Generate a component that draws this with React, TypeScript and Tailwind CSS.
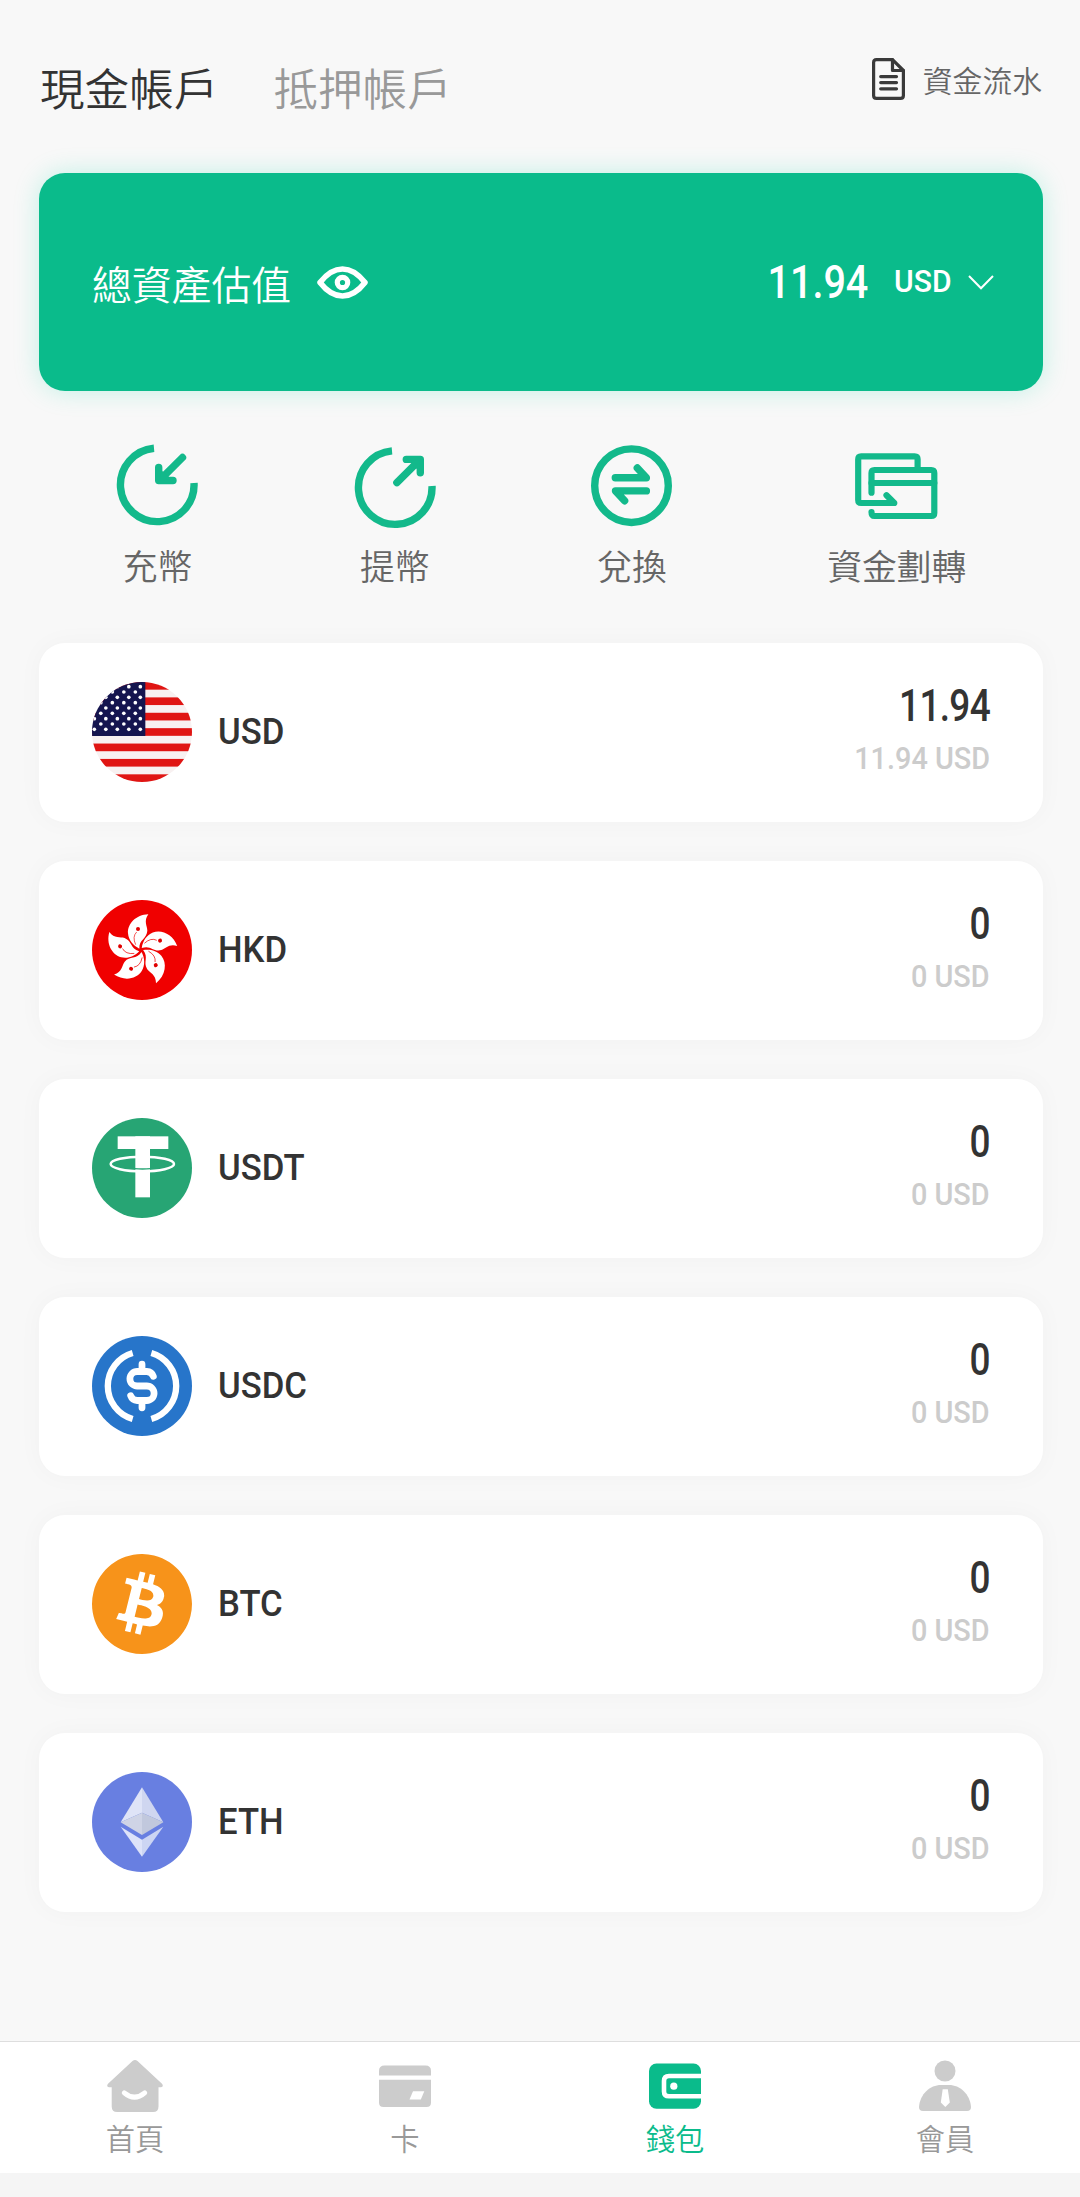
import type { ReactNode } from "react";
import { SiBitcoin } from "react-icons/si";
import { TbCurrencyDollar } from "react-icons/tb";

interface Asset {
  symbol: string;
  amount: string;
  value: string;
  icon: ReactNode;
}

interface Action {
  label: string;
  icon: ReactNode;
}

interface NavItem {
  label: string;
  active?: boolean;
  icon: ReactNode;
}

const STRIPES = [0, 2, 4, 6, 8, 10, 12];
const STAR_ROWS = [0, 1, 2, 3, 4, 5, 6, 7, 8];
const STAR_COLS = [0, 1, 2, 3, 4];
const PETALS = [0, 72, 144, 216, 288];

function UsdIcon() {
  return (
    <svg viewBox="0 0 300 300" className="size-full rounded-full">
      <rect width="300" height="300" fill="#f8f1f1" />
      {STRIPES.map((i) => (
        <rect key={i} y={i * 23.08} width="300" height="23" fill="#e01513" />
      ))}
      <rect width="160" height="162" fill="#15154f" />
      {STAR_ROWS.map((row) =>
        STAR_COLS.map((col) => (
          <circle
            key={`${row}-${col}`}
            cx={(row % 2 ? 130 : 145) - col * 34.5}
            cy={14 + row * 16}
            r="5.5"
            fill="#fff"
          />
        ))
      )}
    </svg>
  );
}

function HkdIcon() {
  return (
    <svg viewBox="0 0 300 300" className="size-full">
      <circle cx="150" cy="150" r="150" fill="#f00000" />
      {PETALS.map((angle) => (
        <g key={angle} transform={`rotate(${angle} 147 150)`}>
          <path
            d="M169 43C132 44 106 72 108 100C110 122 124 137 142 146C141 117 164 118 166 92C166 78 154 64 169 43Z"
            fill="#fff"
          />
          <path d="M134 96Q120 110 131 134" fill="none" stroke="#f00000" strokeWidth="2" />
          <circle cx="138" cy="87" r="6" fill="#e00000" />
        </g>
      ))}
    </svg>
  );
}

function UsdtIcon() {
  return (
    <svg viewBox="0 0 300 300" className="size-full">
      <circle cx="150" cy="150" r="150" fill="#27a574" />
      <ellipse cx="151" cy="138" rx="95" ry="22" fill="none" stroke="#fff" strokeWidth="7.5" />
      <rect x="77" y="55" width="152" height="38" fill="#fff" />
      <rect x="130" y="55" width="44" height="183" fill="#fff" />
      <path d="M128 152Q151 154 176 152" fill="none" stroke="#27a574" strokeWidth="4" />
    </svg>
  );
}

function UsdcIcon() {
  return (
    <div className="flex size-full items-center justify-center rounded-full bg-[#2775ca]">
      <svg viewBox="0 0 300 300" className="size-full shrink-0" fill="none" stroke="#fff" strokeWidth="19">
        <path d="M122 51A103 103 0 0 0 122 249" />
        <path d="M178 51A103 103 0 0 1 178 249" />
      </svg>
      <TbCurrencyDollar className="-ml-[100px] h-[58px] w-[100px] shrink-0 text-white [stroke-width:2.8]" />
    </div>
  );
}

function BtcIcon() {
  return (
    <div className="size-full rounded-full bg-white">
      <SiBitcoin className="size-full text-[#f7931a]" />
    </div>
  );
}

function EthIcon() {
  return (
    <svg viewBox="0 0 300 300" className="size-full">
      <circle cx="150" cy="150" r="150" fill="#687fe1" />
      <path d="M150 46L86 151L150 122Z" fill="#dfe4f7" />
      <path d="M150 46L214 151L150 122Z" fill="#cfd6f0" />
      <path d="M86 151L150 122V189Z" fill="#cfd4e6" />
      <path d="M214 151L150 122V189Z" fill="#c1c8dd" />
      <path d="M86 164L150 203V254Z" fill="#dde3f9" />
      <path d="M214 164L150 203V254Z" fill="#ccd5f3" />
    </svg>
  );
}

function ActionSvg({ children, strokeWidth = 7.4 }: { children: ReactNode; strokeWidth?: number }) {
  return (
    <svg
      viewBox="0 0 84 84"
      className="size-[84px] overflow-visible"
      fill="none"
      stroke="#13b98b"
      strokeWidth={strokeWidth}
      strokeLinecap="round"
      strokeLinejoin="round"
    >
      {children}
    </svg>
  );
}

const ACTIONS: Action[] = [
  {
    label: "充幣",
    icon: (
      <ActionSvg>
        <path d="M78 40A36.8 36.8 0 1 1 38 5.2" strokeLinecap="butt" />
        <path d="M66.5 14.5L43.8 37.2M42.7 24.5V37.5H57" />
        <path d="M45 27L55 36L44 38Z" fill="#13b98b" stroke="none" />
      </ActionSvg>
    ),
  },
  {
    label: "提幣",
    icon: (
      <ActionSvg>
        <path d="M79 43A36.8 36.8 0 1 1 39 7.9" strokeLinecap="butt" />
        <path d="M43.9 39.7L67 16.6M53.3 16.4H67.3V29.7" />
        <path d="M56 18L66 28L67 17Z" fill="#13b98b" stroke="none" />
      </ActionSvg>
    ),
  },
  {
    label: "兌換",
    icon: (
      <ActionSvg>
        <circle cx="41.5" cy="42.7" r="36.8" />
        <path d="M25.3 34.7H56.4L47.3 24.9" />
        <path d="M56.4 47.9H25.5L34.6 57.8" />
      </ActionSvg>
    ),
  },
  {
    label: "資金劃轉",
    icon: (
      <ActionSvg strokeWidth={6.2}>
        <path d="M62.6 24V16.3Q62.6 13.4 59.6 13.4H6.2Q3.2 13.4 3.2 16.4V57Q3.2 60 6.2 60H39.3L31.5 52.3" />
        <path d="M16.5 49.7V30Q16.5 27 19.5 27H76.3Q79.3 27 79.3 30V70Q79.3 73 76.3 73H19.5Q16.5 73 16.5 69" />
        <path d="M16.5 40H79.3" />
      </ActionSvg>
    ),
  },
];

const ASSETS: Asset[] = [
  { symbol: "USD", amount: "11.94", value: "11.94 USD", icon: <UsdIcon /> },
  { symbol: "HKD", amount: "0", value: "0 USD", icon: <HkdIcon /> },
  { symbol: "USDT", amount: "0", value: "0 USD", icon: <UsdtIcon /> },
  { symbol: "USDC", amount: "0", value: "0 USD", icon: <UsdcIcon /> },
  { symbol: "BTC", amount: "0", value: "0 USD", icon: <BtcIcon /> },
  { symbol: "ETH", amount: "0", value: "0 USD", icon: <EthIcon /> },
];

const NAV_ITEMS: NavItem[] = [
  {
    label: "首頁",
    icon: (
      <svg viewBox="0 0 56 52" className="h-[52px] w-14" fill="#ccc">
        <path d="M25.5 1Q28 -1 30.5 1L55 23.8Q57 26.5 54 27.2H51.5V46.5Q51.5 52 46 52H10.2Q4.7 52 4.7 46.5V27.2H2Q-1 26.5 1 23.8Z" />
        <path d="M17.3 32.8Q27.5 41.5 37.7 32.8" fill="none" stroke="#fff" strokeWidth="5" strokeLinecap="round" />
      </svg>
    ),
  },
  {
    label: "卡",
    icon: (
      <svg viewBox="0 0 52 52" className="size-[52px]" fill="#ccc">
        <path d="M0 15.5V11Q0 5.5 5.5 5.5H46.5Q52 5.5 52 11V15.5Z" />
        <path d="M0 19.7H52V42.5Q52 47 47.5 47H4.5Q0 47 0 42.5Z" />
        <path d="M34 31.3H45.3L41.8 39.5H30.5Z" fill="#fff" />
      </svg>
    ),
  },
  {
    label: "錢包",
    active: true,
    icon: (
      <svg viewBox="0 0 52 52" className="size-[52px]">
        <rect y="3.6" width="52" height="45.2" rx="7.5" fill="#0abb8b" />
        <path d="M53 16H20Q15 16 15 21V31.5Q15 36.3 20 36.3H53" fill="none" stroke="#fff" strokeWidth="4.6" />
        <circle cx="24.8" cy="26.2" r="3.6" fill="#fff" />
      </svg>
    ),
  },
  {
    label: "會員",
    icon: (
      <svg viewBox="0 0 52 52" className="size-[52px]" fill="#ccc">
        <circle cx="26" cy="11" r="10.5" />
        <path d="M0 47C1 34 11 25 22 25H30C41 25 51 34 52 47Q52 51 48 51H4Q0 51 0 47Z" />
        <path d="M23.7 29.3H28.8L30.8 42.5L26.3 47L21.8 42.5Z" fill="#fff" />
      </svg>
    ),
  },
];

function Header() {
  return (
    <header className="flex h-[173px] shrink-0 justify-between pl-10 pr-[38px]">
      <div className="flex gap-[55px] pt-16 text-[44.6px] leading-[45px]">
        <h1 className="text-[#333]">現金帳戶</h1>
        <span className="text-[#999]">抵押帳戶</span>
      </div>
      <div className="box-content flex h-[42px] items-center gap-[18px] pt-[58px]">
        <svg
          viewBox="0 0 33 42"
          className="h-[42px] w-[33px]"
          fill="none"
          stroke="#3a3a3a"
          strokeWidth="3.2"
          strokeLinecap="round"
          strokeLinejoin="round"
        >
          <path d="M4.5 1.6H20.5L31.4 12.5V37.5Q31.4 40.4 28.5 40.4H4.5Q1.6 40.4 1.6 37.5V4.5Q1.6 1.6 4.5 1.6Z" />
          <path d="M20.5 1.6V12.5H31.4" />
          <path d="M8.7 18.6H24.5M8.7 24.6H24.5M8.7 30.8H24.5" />
        </svg>
        <span className="text-[29.8px] leading-[42px] text-[#666]">資金流水</span>
      </div>
    </header>
  );
}

function TotalCard() {
  return (
    <section className="ml-[39px] flex h-[218px] w-[1004px] shrink-0 items-center justify-between rounded-[26px] bg-[#0abb8b] pl-[53px] pr-[49px] text-white shadow-[0_0_26px_rgba(10,220,170,0.22)]">
      <div className="flex items-center">
        <span className="pt-px text-[39.8px] leading-[60px]">總資產估值</span>
        <svg viewBox="0 0 51 33" className="ml-[26px] h-[33px] w-[51px]" fill="none" stroke="#fff">
          <path
            d="M3 16.5C10 7.5 17 3 25.5 3S41 7.5 48 16.5C41 25.5 34 30 25.5 30S10 25.5 3 16.5Z"
            strokeWidth="5.6"
            strokeLinejoin="round"
          />
          <circle cx="25.5" cy="16.5" r="5.2" strokeWidth="5.2" />
        </svg>
      </div>
      <div className="flex items-center font-[Roboto] font-medium">
        <span className="origin-right scale-x-[0.86] text-[46px] leading-[60px]">11.94</span>
        <span className="ml-[26px] w-[57px] origin-left scale-x-[0.97] text-[31px] leading-[60px]">USD</span>
        <svg viewBox="0 0 26 15" className="ml-[17px] h-[15px] w-[26px]" fill="none" stroke="#fff" strokeWidth="2">
          <path d="M1 1L13 13.3L25 1" />
        </svg>
      </div>
    </section>
  );
}

function AssetRow({ asset }: { asset: Asset }) {
  return (
    <li className="flex h-[178.5px] items-center rounded-[26px] bg-white px-[53px] font-[Roboto] font-medium shadow-[0_0_26px_rgba(0,0,0,0.03)]">
      <div className="size-[100px] shrink-0">{asset.icon}</div>
      <span className="ml-[26px] origin-left scale-x-[0.95] text-[36.5px] leading-[50px] text-[#333]">{asset.symbol}</span>
      <div className="ml-auto flex flex-col items-end pt-px">
        <span className="origin-right scale-x-[0.85] text-[43.5px] leading-[52px] tracking-[-0.8px] text-[#333]">
          {asset.amount}
        </span>
        <span className="origin-right scale-x-[0.93] text-[31px] leading-[52px] text-[#ccc]">{asset.value}</span>
      </div>
    </li>
  );
}

export default function App() {
  return (
    <main
      lang="zh-Hant"
      className="flex h-[2197px] w-[1080px] flex-col bg-[#f8f8f8] font-['Noto_Sans_CJK_TC',sans-serif] font-[350]"
    >
      <Header />
      <TotalCard />
      <div className="ml-[39px] mt-[52px] flex h-[200px] w-[1004px] shrink-0 justify-around">
        {ACTIONS.map((action) => (
          <button key={action.label} type="button" className="flex min-w-[84px] flex-col items-center">
            {action.icon}
            <span className="mt-[13px] text-[34.8px] leading-[50px] text-[#666]">{action.label}</span>
          </button>
        ))}
      </div>
      <ul className="ml-[39px] flex w-[1004px] grow flex-col gap-[39.5px]">
        {ASSETS.map((asset) => (
          <AssetRow key={asset.symbol} asset={asset} />
        ))}
      </ul>
      <nav className="grid h-[132px] shrink-0 grid-cols-4 border-t border-[#dedede] bg-white">
        {NAV_ITEMS.map((item) => (
          <a key={item.label} className="flex flex-col items-center pt-[18px]">
            {item.icon}
            <span
              className={`mt-[5px] text-[29.3px] leading-[40px] ${item.active ? "text-[#0abb8b]" : "text-[#999]"}`}
            >
              {item.label}
            </span>
          </a>
        ))}
      </nav>
      <div className="h-6 shrink-0 bg-[#f5f5f5]" />
    </main>
  );
}
